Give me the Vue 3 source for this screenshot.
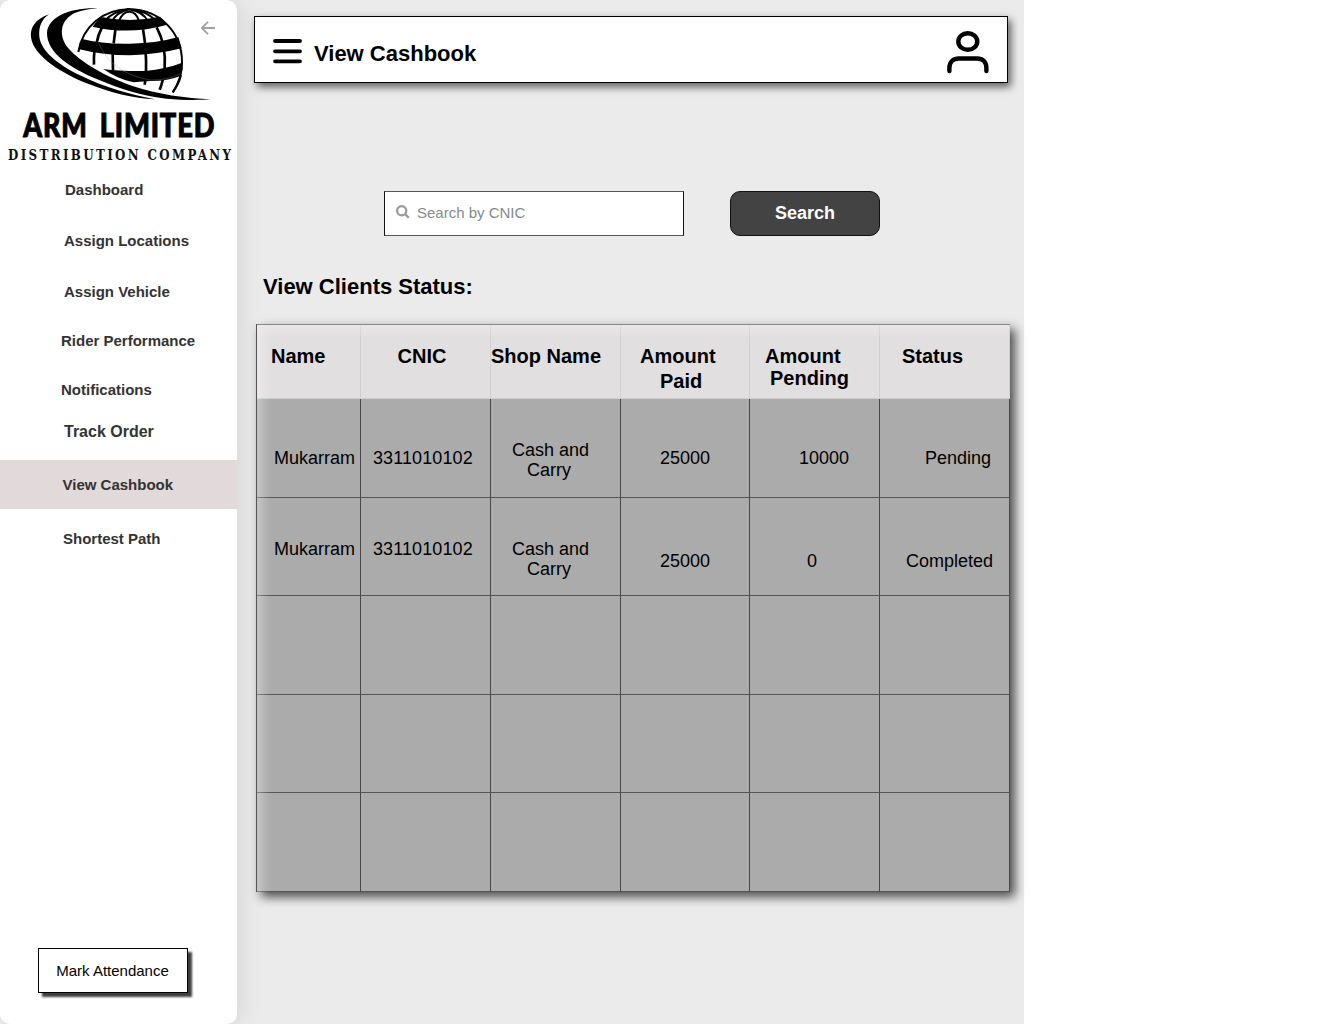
<script setup>
const navItems = [
  { label: 'Dashboard', key: 'dashboard' },
  { label: 'Assign Locations', key: 'locations' },
  { label: 'Assign Vehicle', key: 'vehicle' },
  { label: 'Rider Performance', key: 'performance' },
  { label: 'Notifications', key: 'notifications' },
  { label: 'Track Order', key: 'track' },
  { label: 'View Cashbook', key: 'cashbook' },
  { label: 'Shortest Path', key: 'path' },
]

const columns = [
  { lines: ['Name'], key: 'name' },
  { lines: ['CNIC'], key: 'cnic' },
  { lines: ['Shop Name'], key: 'shop' },
  { lines: ['Amount', 'Paid'], key: 'paid' },
  { lines: ['Amount', 'Pending'], key: 'due' },
  { lines: ['Status'], key: 'status' },
]

const rows = [
  { id: 1, name: ['Mukarram'], cnic: ['3311010102'], shop: ['Cash and', 'Carry'], paid: ['25000'], due: ['10000'], status: ['Pending'] },
  { id: 2, name: ['Mukarram'], cnic: ['3311010102'], shop: ['Cash and', 'Carry'], paid: ['25000'], due: ['0'], status: ['Completed'] },
  { id: 3 },
  { id: 4 },
  { id: 5 },
]
</script>

<template>
  <div class="app">
    <aside class="sidebar">
      <svg class="logo" viewBox="0 0 711 495">
        <path d="M147 43C104 58 90 84 93 112C100 170 190 222 260 250C330 278 400 296 465 298C400 286 310 262 240 226C170 190 124 154 118 110C115 80 126 57 147 43Z" />
        <path d="M293 25C210 22 145 50 141 98C140 160 215 205 290 237C360 267 430 289 500 296C550 301 600 300 632 298C560 296 470 282 400 259C320 232 240 186 205 145C175 108 181 66 215 44C238 31 265 28 293 25Z" />
        <g fill="none" stroke="#000" stroke-width="6">
          <path d="M235 156C247 80 309 28 388 28C480 28 546 98 546 186C546 220 535 252 518 277" />
          <path d="M357 64Q367 35 388 35Q409 35 417 64M315 62Q340 34 385 28M335 66Q350 36 388 28M466 60Q435 32 388 28M444 64Q430 36 388 28" />
          <path d="M306 82Q294 105 290 128M283 155Q281 175 282 194M346 90L341 130M338 160L339 212" stroke-width="8" />
          <path d="M429 88Q440 150 438 215Q437 238 434 254M470 82Q499 135 494 205Q489 246 479 269" stroke-width="8" />
          <path d="M543 225Q537 252 518 277" />
        </g>
        <path d="M300 50Q388 70 480 50L502 74Q388 106 278 80Z" />
        <path d="M246 117Q310 133 390 131Q470 130 535 111L545 145Q470 164 390 166Q310 166 238 148Z" />
        <path d="M310 207Q360 214 435 213Q500 206 547 188Q550 205 543 227Q500 244 450 243L400 247Q350 236 310 207Z" />
        <path d="M296 128Q330 218 450 240Q500 242 542 221" fill="none" stroke="#999" stroke-width="1" />
        <text class="brand" x="70" y="410" textLength="193" lengthAdjust="spacingAndGlyphs">ARM</text>
        <text class="brand" x="299" y="410" textLength="347" lengthAdjust="spacingAndGlyphs">LIMITED</text>
        <text class="tagline" transform="scale(.86 1)" x="28" y="481" textLength="778" lengthAdjust="spacing">DISTRIBUTION COMPANY</text>
      </svg>
      <svg class="back" viewBox="0 0 14 14"><path d="M14 7H1M7 .8L.8 7L7 13.2" /></svg>
      <nav>
        <a v-for="item in navItems" :key="item.key" :class="['nav-item', item.key]">{{ item.label }}</a>
      </nav>
      <button class="attendance">Mark Attendance</button>
    </aside>

    <main class="content">
      <header class="topbar">
        <svg class="menu" viewBox="0 0 29 26"><path d="M2 3H27M2 13.3H27M2 23.3H27" /></svg>
        <h1>View Cashbook</h1>
        <svg class="user" viewBox="0 0 42 44">
          <ellipse cx="20.8" cy="11.5" rx="9.5" ry="8.3" />
          <path d="M2.4 41V38C2.4 32 6 28.5 12 28.5H30C36 28.5 39.4 32 39.4 38V41" />
        </svg>
      </header>

      <div class="search-row">
        <div class="search-box">
          <svg viewBox="0 0 14 14"><circle cx="5.7" cy="5.7" r="4.6" /><path d="M9.1 9.1L12.8 12.8" /></svg>
          <span>Search by CNIC</span>
        </div>
        <button class="search-btn">Search</button>
      </div>

      <h2>View Clients Status:</h2>

      <div class="table">
        <div class="row head">
          <div v-for="col in columns" :key="col.key" :class="['cell', col.key]">
            <span v-for="line in col.lines" :key="line">{{ line }}</span>
          </div>
        </div>
        <div v-for="row in rows" :key="row.id" :class="['row', 'r' + row.id]">
          <div v-for="col in columns" :key="col.key" :class="['cell', col.key]">
            <span v-for="line in row[col.key]" :key="line">{{ line }}</span>
          </div>
        </div>
      </div>
    </main>
  </div>
</template>

<style>
body {
  background: #fff;
}
</style>

<style scoped>
.app {
  display: flex;
  width: 1024px;
  height: 1024px;
  background: #ebebeb;
  font-family: 'Liberation Sans', Arial, sans-serif;
  color: #000;
}
.app * {
  box-sizing: border-box;
}
.sidebar {
  position: relative;
  display: flex;
  flex-direction: column;
  flex: none;
  width: 237px;
  height: 1024px;
  background: #fff;
  border-radius: 10px;
  box-shadow: 4px 0 24px rgba(0, 0, 0, 0.09);
}
.logo {
  flex: none;
  width: 237px;
  height: 165px;
}
.brand {
  font: 900 95px Lato, sans-serif;
  letter-spacing: 3px;
  stroke: #000;
  stroke-width: 3px;
}
.tagline {
  font: bold 46px 'DejaVu Serif Condensed', 'DejaVu Serif', serif;
  fill: #111;
}
.back {
  position: absolute;
  top: 21px;
  left: 201px;
  width: 14px;
  height: 14px;
  fill: none;
  stroke: #a4a4a4;
  stroke-width: 1.9;
}
nav {
  display: flex;
  flex-direction: column;
  margin-top: -1px;
}
.nav-item {
  display: flex;
  align-items: center;
  height: 50px;
  padding-left: 64px;
  color: #333;
  font-size: 15px;
  font-weight: bold;
  white-space: nowrap;
}
.nav-item.dashboard { padding-left: 65px; }
.nav-item.locations { height: 52px; }
.nav-item.performance { height: 48px; padding-left: 61px; }
.nav-item.notifications { padding-left: 61px; }
.nav-item.track { height: 35px; font-size: 16px; }
.nav-item.cashbook {
  height: 49px;
  margin-top: 11px;
  padding-left: 62.5px;
  background: #e2d9da;
}
.nav-item.path { height: 58px; padding-left: 63px; }
.attendance {
  width: 150px;
  height: 45px;
  margin: auto 0 31px 38px;
  padding: 0 1px 0 0;
  border: 1px solid #000;
  background: #fff;
  box-shadow: 4px 4px 2px rgba(0, 0, 0, 0.75);
  font: 15px 'Liberation Sans', Arial, sans-serif;
  color: #000;
}
.content {
  flex: none;
  width: 787px;
  padding: 16px 0 0 17px;
}
.topbar {
  display: flex;
  align-items: center;
  width: 754px;
  height: 67px;
  padding: 0 18px;
  border: 1px solid #000;
  background: #fff;
  box-shadow: 3px 4px 8px rgba(0, 0, 0, 0.6);
}
.menu {
  width: 29px;
  height: 26px;
  margin-top: 3px;
  fill: none;
  stroke: #000;
  stroke-width: 3.8;
  stroke-linecap: round;
}
h1 {
  flex: 1;
  margin: 9px 0 0 12px;
  font-size: 22px;
  line-height: 26px;
}
.user {
  width: 42px;
  height: 44px;
  margin-top: 5px;
  fill: none;
  stroke: #000;
  stroke-width: 4.4;
  stroke-linecap: round;
}
.search-row {
  display: flex;
  gap: 46px;
  margin: 108px 0 0 130px;
}
.search-box {
  display: flex;
  align-items: center;
  width: 300px;
  height: 45px;
  padding-left: 11px;
  border: 1px solid #111;
  border-top-color: #555;
  border-bottom-color: #555;
  background: #fff;
  color: #858a8e;
  font-size: 15px;
}
.search-box svg {
  width: 14px;
  height: 14px;
  margin: -3px 7px 0 0;
  fill: none;
  stroke: #999;
  stroke-width: 2.2;
}
.search-box span {
  margin-top: -2px;
}
.search-btn {
  width: 150px;
  height: 45px;
  padding: 0;
  border: 1px solid #111;
  border-radius: 10px;
  background: #434343;
  color: #fff;
  font: bold 18px 'Liberation Sans', Arial, sans-serif;
}
h2 {
  margin: 37px 0 0 9px;
  font-size: 22px;
  line-height: 28px;
}
.table {
  position: relative;
  width: 754px;
  margin: 23px 0 0 2px;
  border-left: 1px solid #555;
  background: #ababab;
  box-shadow: 5px 5px 10px rgba(0, 0, 0, 0.68);
}
.table::after {
  content: '';
  position: absolute;
  inset: 1px 0 0 0;
  box-shadow: inset 10px 8px 12px -4px rgba(255, 255, 255, 0.35);
}
.row {
  display: grid;
  grid-template-columns: 104px 130px 130px 129px 130px 130px;
  height: 99px;
}
.row.r2, .row.r4 { height: 98px; }
.cell {
  display: flex;
  flex-direction: column;
  padding-top: 49px;
  border-right: 1px solid #484848;
  border-bottom: 1px solid #555;
  font-size: 18px;
  line-height: 20px;
  white-space: nowrap;
}
.cell.name { padding-left: 17px; }
.cell.cnic { padding-left: 12px; letter-spacing: 0.1px; }
.cell.shop { padding: 41px 10px 0 0; align-items: center; }
.cell.shop span:last-child { margin-right: 3px; }
.cell.paid { padding-left: 39px; }
.cell.due { padding-left: 49px; }
.cell.status { padding-left: 45px; }
.r2 .name, .r2 .cnic { padding-top: 41px; }
.r2 .paid, .r2 .due, .r2 .status { padding-top: 53px; }
.r2 .due { padding-left: 57px; }
.r2 .status { padding-left: 26px; }
.head {
  height: 75px;
  border-top: 1px solid #888;
  background: #e1dfe0;
}
.head .cell {
  padding-top: 20px;
  border-right-color: #d0d0d0;
  border-bottom-color: #ccc;
  font-size: 20px;
  font-weight: bold;
  line-height: 22px;
}
.head .name { padding-left: 14px; }
.head .cnic { padding-left: 36.5px; letter-spacing: 0; }
.head .shop { padding: 20px 0 0; align-items: flex-start; }
.head .paid { padding-left: 19px; line-height: 25px; padding-top: 19px; }
.head .paid span:last-child { margin-left: 20px; }
.head .due { padding-left: 15px; }
.head .due span:last-child { margin-left: 5px; }
.head .status { padding-left: 22px; }
</style>
